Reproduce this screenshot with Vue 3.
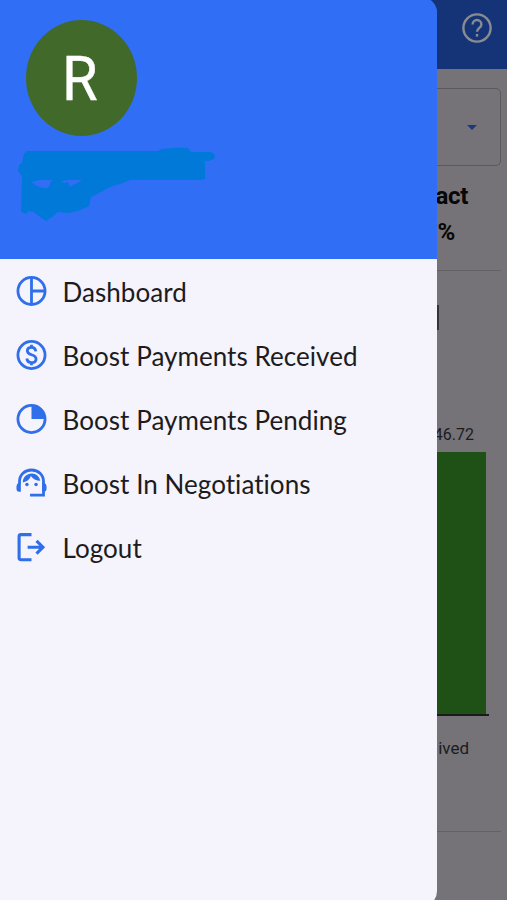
<script setup>
const items = [
  { label: 'Dashboard', icon: 'dashboard' },
  { label: 'Boost Payments Received', icon: 'paid' },
  { label: 'Boost Payments Pending', icon: 'pending' },
  { label: 'Boost In Negotiations', icon: 'agent' },
  { label: 'Logout', icon: 'logout' },
]
</script>

<template>
  <div class="screen">
    <div class="page">
      <header class="topbar">
        <svg class="help" viewBox="0 0 32 32">
          <circle cx="16" cy="16" r="13.6" />
          <path d="M11.6 12.4a4.4 4.4 0 0 1 8.8 0c0 3.2-4.4 3.8-4.4 7.4" />
          <path d="M16 22v2.6" />
        </svg>
      </header>
      <main class="content">
        <div class="select"><span class="caret"></span></div>
        <div class="summary">
          <div class="summary-title">act</div>
          <div class="summary-value">%</div>
        </div>
        <section class="chart">
          <div class="chart-title"></div>
          <div class="bar-value">46.72</div>
          <div class="bar"></div>
          <div class="bar-label">ived</div>
        </section>
      </main>
    </div>

    <aside class="drawer">
      <div class="profile">
        <div class="avatar"><span class="initial">R</span></div>
        <svg class="scribble" viewBox="0 0 200 76">
          <path fill-rule="evenodd" d="M9 5H139L144 3Q160 1 170 2L173 6H193Q199 9 196 13L191 15H187V33Q184 34 180 34H112L105 37L92 41L83 46L73 51L71 60L60 65L50 67L40 66L34 71L28 75L22 71L16 66L10 65L8 68L3 66L4 30L0 25L1 19L4 17L6 8ZM13 36L19 40L25 42L30 42L34 34H22ZM43 35L46 37L50 36L52 41L64 34H52Z" />
        </svg>
      </div>
      <nav class="menu">
        <a v-for="item in items" :key="item.label" class="item">
          <svg class="icon" viewBox="0 0 32 32">
            <template v-if="item.icon === 'dashboard'">
              <circle cx="16" cy="16" r="14" class="line" />
              <path d="M16 2V30M16 16H30" class="line" />
            </template>
            <template v-else-if="item.icon === 'paid'">
              <circle cx="16" cy="16" r="14" class="line" />
              <path d="M20.4 12.2C20.1 9.6 18.4 8.2 16 8.2C13.4 8.2 11.7 9.6 11.7 11.9C11.7 17 20.7 14.5 20.7 20C20.7 22.4 18.8 23.8 16.1 23.8C13.3 23.8 11.5 22.2 11.2 19.6M16 5.5V9M16 23V26.5" class="line" />
            </template>
            <template v-else-if="item.icon === 'pending'">
              <circle cx="16" cy="16" r="14" class="line" />
              <path d="M16 2A14 14 0 0 1 30 16H16Z" class="fill" />
            </template>
            <template v-else-if="item.icon === 'agent'">
              <path d="M3.6 17V14.8C3.6 7.6 9 2.6 16 2.6S28.4 7.6 28.4 14.8V28.6H14.5" class="line" />
              <path d="M5 15.8H3.3Q.5 16.8.5 19.3V22Q.5 25 3.3 25H5ZM27 15.8H28.7Q31.5 16.8 31.5 19.3V22Q31.5 25 28.7 25H27Z" class="fill" />
              <path d="M7 15.6C7.1 9.8 11 6.2 16.3 6.2C20.8 6.2 24.3 9.4 25 13.7C20.8 13.7 17.4 11.9 15.4 8.8C14.2 12.2 11.5 14.6 7 15.6Z" class="fill" />
              <circle cx="11.3" cy="17.6" r="1.8" class="fill" />
              <circle cx="20.7" cy="17.6" r="1.8" class="fill" />
            </template>
            <template v-else>
              <path d="M16 3.2H5.2Q3.2 3.2 3.2 5.2V27.2Q3.2 29.2 5.2 29.2H16" class="line thick" />
              <path d="M12 16.2H27.5M21.2 9.6L27.8 16.2L21.2 22.8" class="line thick" />
            </template>
          </svg>
          <span class="label">{{ item.label }}</span>
        </a>
      </nav>
    </aside>
  </div>
</template>

<style>
body {
  margin: 0;
}
</style>

<style scoped>
.screen {
  position: relative;
  width: 507px;
  height: 900px;
  overflow: hidden;
  background: #757377;
  font-family: Roboto, sans-serif;
}
.page {
  display: flex;
  flex-direction: column;
  height: 900px;
}
.topbar {
  display: flex;
  justify-content: flex-end;
  box-sizing: border-box;
  height: 69px;
  padding: 12px 14px 0 0;
  background: #153478;
}
.help {
  width: 32px;
  height: 32px;
  fill: none;
  stroke: #8a8b90;
  stroke-width: 2.4;
}
.content {
  padding: 19px 6px 0 0;
}
.select {
  display: flex;
  align-items: center;
  justify-content: flex-end;
  box-sizing: border-box;
  height: 78px;
  padding-right: 23px;
  border: 1.5px solid #5a595c;
  border-radius: 5px;
}
.caret {
  border: 5.5px solid transparent;
  border-top-color: #1b377f;
  border-bottom: 0;
}
.summary {
  box-sizing: border-box;
  height: 105px;
  padding: 12px 33px 0 0;
  border-bottom: 1px solid #626164;
  color: #070707;
  font-size: 24px;
  font-weight: 700;
  line-height: 36px;
  letter-spacing: -0.3px;
  text-align: right;
}
.summary-value {
  padding-right: 13px;
}
.chart {
  display: flex;
  flex-direction: column;
  align-items: flex-end;
  box-sizing: border-box;
  height: 561px;
  padding-top: 34px;
  border-bottom: 1px solid #626164;
  color: #1c1b1e;
}
.chart-title {
  width: 20px;
  height: 25px;
  margin-right: 62px;
  background: #343337;
}
.bar-value {
  height: 20px;
  margin: 95px 27px 0 0;
  font-size: 16px;
  line-height: 20px;
}
.bar {
  width: 80px;
  height: 262px;
  margin: 7px 15px 0 0;
  background: #1f5015;
}
.bar-label {
  box-sizing: border-box;
  width: 90px;
  margin-right: 12px;
  padding: 22px 20px 0 0;
  border-top: 2px solid #1a191b;
  font-size: 17px;
  line-height: 20px;
  text-align: right;
}
.drawer {
  position: absolute;
  top: -3px;
  left: 0;
  box-sizing: border-box;
  width: 437px;
  height: 910px;
  padding-top: 3px;
  overflow: hidden;
  border-radius: 0 16px 16px 0;
  background: linear-gradient(#306ef6 20px, #f5f3fb 20px);
}
.profile {
  box-sizing: border-box;
  height: 259px;
  padding: 20px 0 0 26px;
  background: #306ef6;
}
.avatar {
  display: flex;
  align-items: center;
  justify-content: center;
  width: 111px;
  height: 116px;
  border-radius: 50%;
  background: #416a2a;
  color: #fff;
  font-size: 61px;
  line-height: 1;
}
.initial {
  padding: 3px 3px 0 0;
  transform: scaleX(0.95);
  -webkit-text-stroke: 0.4px #fff;
}
.scribble {
  display: block;
  width: 200px;
  height: 76px;
  margin: 10px 0 0 -8px;
  fill: #0079d9;
}
.menu {
  display: flex;
  flex-direction: column;
}
.item {
  display: flex;
  align-items: center;
  gap: 15.5px;
  height: 64px;
  padding-left: 16px;
}
.icon {
  width: 31px;
  height: 32px;
}
.line {
  fill: none;
  stroke: #2f6fea;
  stroke-width: 2.9;
}
.thick {
  stroke-width: 3.2;
}
.fill {
  fill: #2f6fea;
}
.label {
  color: #1c1b20;
  font-family: Lato, sans-serif;
  font-size: 26px;
  font-variant-ligatures: none;
  letter-spacing: 0.05px;
  line-height: 32px;
  padding-top: 1px;
  white-space: nowrap;
}
</style>
